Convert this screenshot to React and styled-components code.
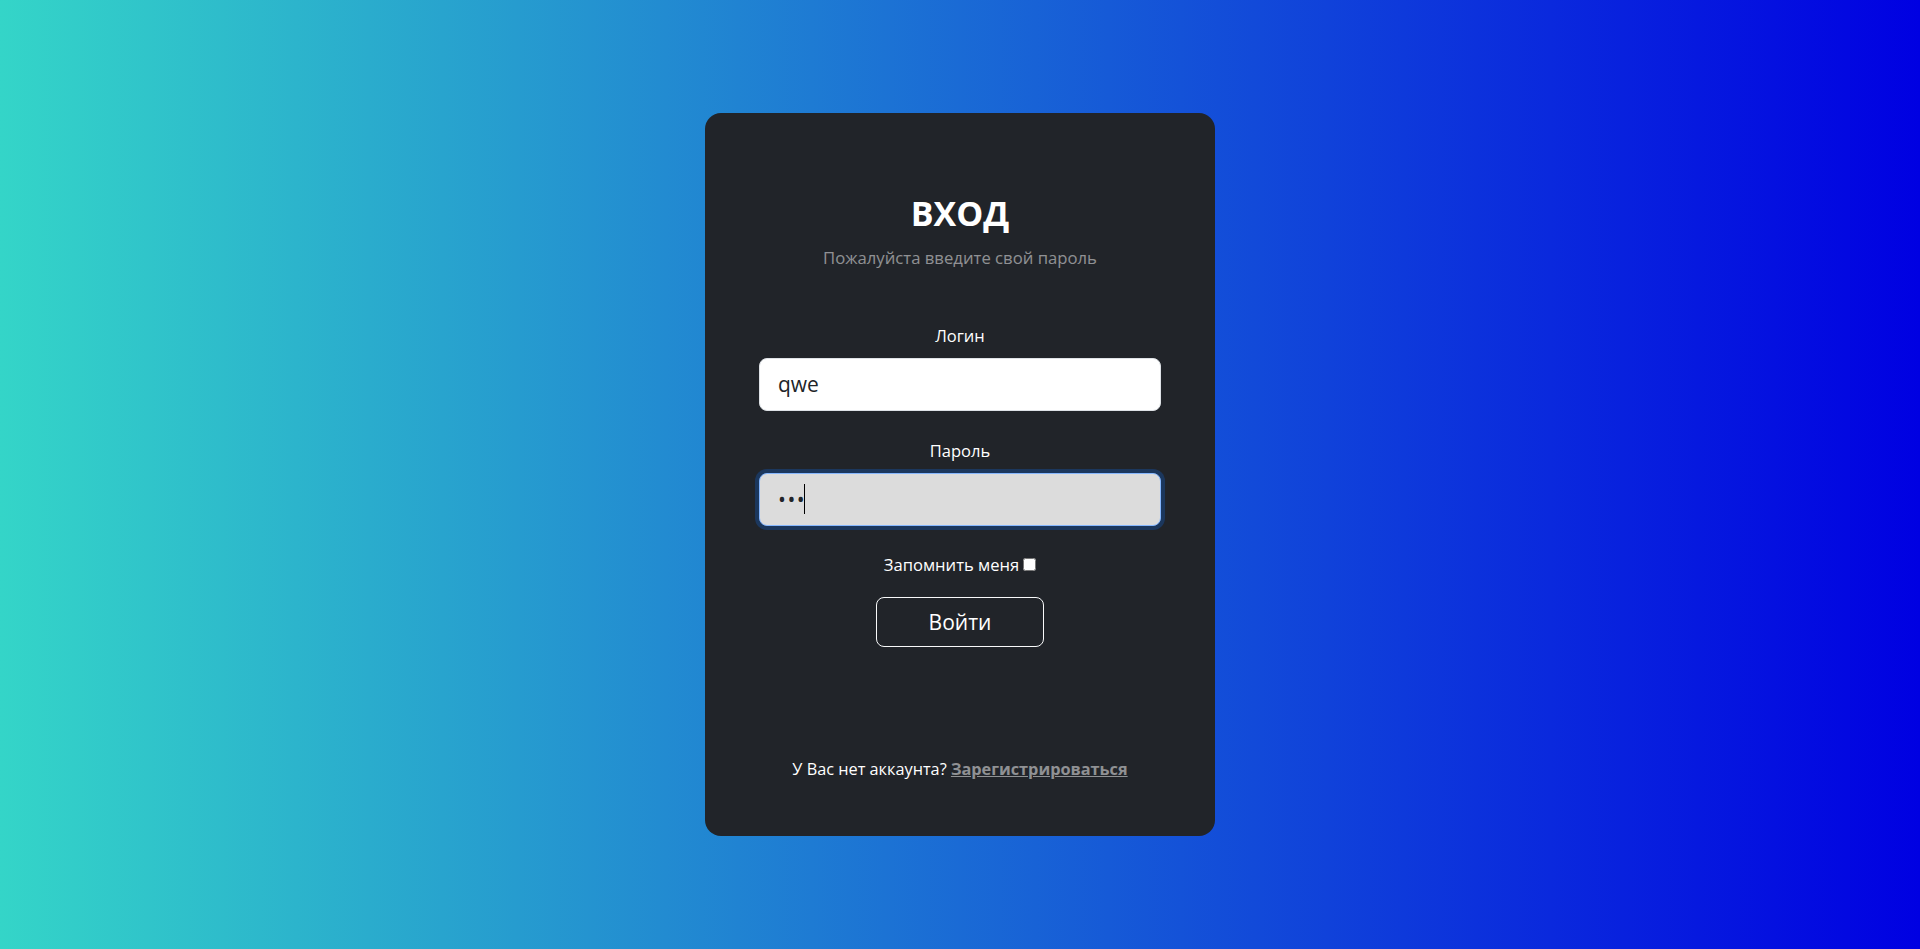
import React, { useState } from "react";
import styled, { createGlobalStyle } from "styled-components";

const GlobalStyle = createGlobalStyle`
  html, body {
    margin: 0;
    padding: 0;
  }
  body {
    font-family: "Open Sans", "Noto Sans", "Liberation Sans", sans-serif;
  }
  * { box-sizing: border-box; }
`;

const Page = styled.main`
  min-height: 100vh;
  display: flex;
  align-items: center;
  justify-content: center;
  background: linear-gradient(to right, rgb(52, 213, 200), rgb(0, 0, 226));
`;

const Card = styled.section`
  width: 510px;
  height: 723px;
  background: #212429;
  border-radius: 16px;
  color: #fff;
  display: flex;
  flex-direction: column;
  align-items: stretch;
  padding: 80px 54px 55px;
  text-align: center;
`;

const Title = styled.h2`
  margin: 0;
  font-size: 34px;
  font-weight: 700;
  line-height: 1.2;
  text-transform: uppercase;
`;

const Subtitle = styled.p`
  margin: 12px 0 0;
  font-size: 16.7px;
  line-height: 24px;
  color: rgba(255, 255, 255, 0.5);
`;

const Form = styled.form`
  display: flex;
  flex-direction: column;
  align-items: stretch;
  margin-top: 54px;
`;

const Field = styled.div`
  display: flex;
  flex-direction: column;
  align-items: stretch;
  gap: 10px;
  & + & {
    margin-top: 28px;
  }
`;

const Label = styled.label`
  font-size: 16.5px;
  line-height: 24px;
  color: #fff;
`;

const InputWrap = styled.div`
  position: relative;
  display: flex;
`;

const Input = styled.input`
  height: 53px;
  width: 100%;
  padding: 0 18px;
  font-family: inherit;
  font-size: 21px;
  color: #212529;
  background: ${(p) => (p.$focused ? "#dcdcdc" : "#fff")};
  border: 1px solid ${(p) => (p.$focused ? "#86b7fe" : "#dee2e6")};
  border-radius: 8px;
  outline: none;
  caret-color: #000;
  letter-spacing: ${(p) => (p.type === "password" ? "1.5px" : "normal")};
  box-shadow: ${(p) => (p.$focused ? "0 0 0 4px rgba(13, 110, 253, 0.25)" : "none")};
  &:focus {
    background: #dcdcdc;
    border-color: #86b7fe;
    box-shadow: 0 0 0 4px rgba(13, 110, 253, 0.25);
  }
`;

const Caret = styled.span`
  position: absolute;
  left: 45px;
  top: 11px;
  width: 1px;
  height: 30px;
  background: #000;
  pointer-events: none;
`;

const RememberRow = styled.label`
  margin-top: 27px;
  display: flex;
  align-items: center;
  justify-content: center;
  gap: 4px;
  font-size: 16.6px;
  line-height: 24px;
`;

const Check = styled.input`
  width: 13px;
  height: 13px;
  margin: 0;
`;

const Submit = styled.button`
  align-self: center;
  margin-top: 20px;
  width: 168px;
  height: 50px;
  background: transparent;
  color: #fff;
  border: 1px solid #f8f9fa;
  border-radius: 8px;
  font-family: inherit;
  font-size: 21px;
  cursor: pointer;
`;

const Footer = styled.p`
  margin: auto 0 0;
  font-size: 16.3px;
  line-height: 24px;
  color: #fff;
`;

const RegisterLink = styled.a`
  color: rgba(255, 255, 255, 0.5);
  font-weight: 700;
  text-decoration: underline;
`;

export default function App() {
  const [login, setLogin] = useState("qwe");
  const [password, setPassword] = useState("qwe");
  return (
    <>
      <GlobalStyle />
      <Page>
        <Card>
          <Title>Вход</Title>
          <Subtitle>Пожалуйста введите свой пароль</Subtitle>
          <Form onSubmit={(e) => e.preventDefault()}>
            <Field>
              <Label htmlFor="login">Логин</Label>
              <InputWrap>
                <Input id="login" type="text" value={login} onChange={(e) => setLogin(e.target.value)} />
              </InputWrap>
            </Field>
            <Field>
              <Label htmlFor="password">Пароль</Label>
              <InputWrap>
                <Input
                  id="password"
                  type="password"
                  $focused
                  value={password}
                  onChange={(e) => setPassword(e.target.value)}
                />
                <Caret />
              </InputWrap>
            </Field>
            <RememberRow>
              Запомнить меня
              <Check type="checkbox" />
            </RememberRow>
            <Submit type="submit">Войти</Submit>
          </Form>
          <Footer>
            У Вас нет аккаунта? <RegisterLink href="#">Зарегистрироваться</RegisterLink>
          </Footer>
        </Card>
      </Page>
    </>
  );
}
